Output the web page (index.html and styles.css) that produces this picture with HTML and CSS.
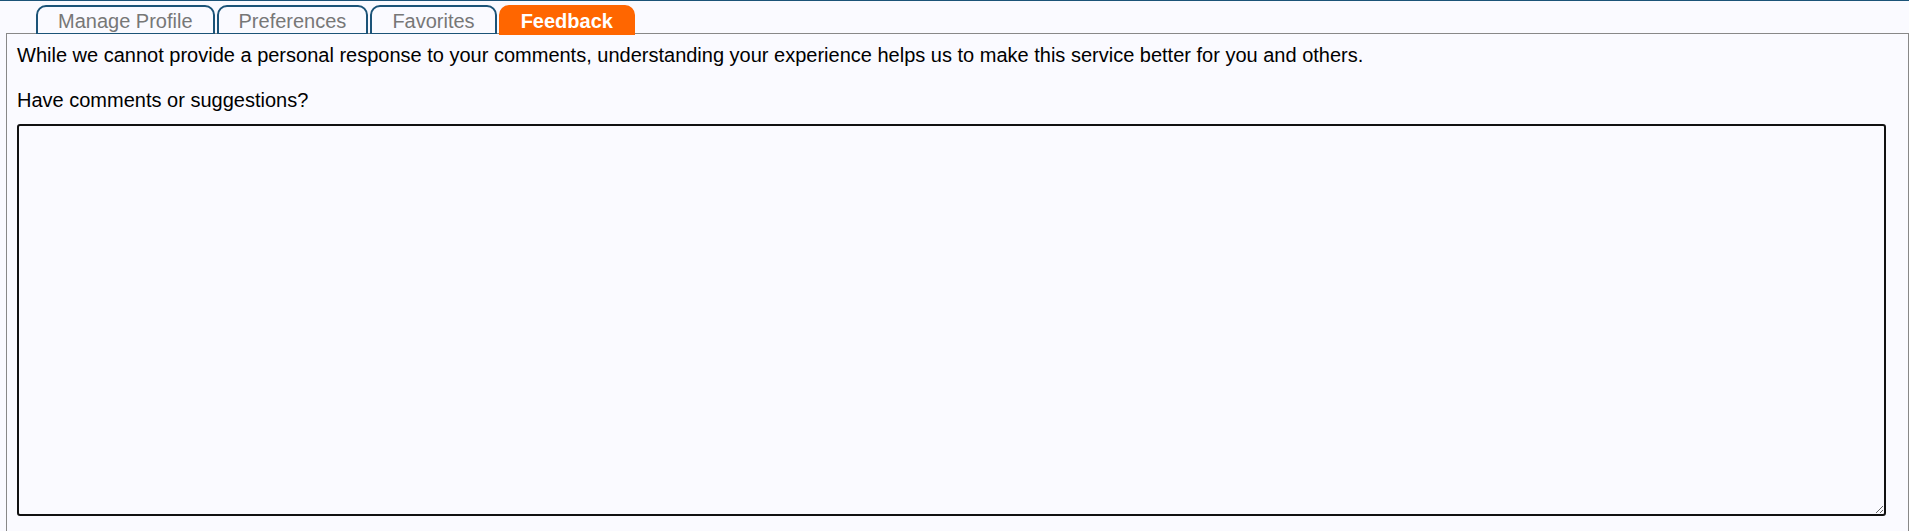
FILE: index.html
```html
<!DOCTYPE html>
<html lang="en">
<head>
  <meta charset="UTF-8">
  <title>Feedback</title>
  <link rel="stylesheet" href="styles.css">
</head>
<body>
  <div class="topbar"></div>
  <ul class="tabs">
    <li class="tab">Manage Profile</li>
    <li class="tab">Preferences</li>
    <li class="tab">Favorites</li>
    <li class="tab active">Feedback</li>
  </ul>
  <form class="panel" action="#">
    <p class="intro">While we cannot provide a personal response to your comments, understanding your experience helps us to make this service better for you and others.</p>
    <label for="comments" class="ask">Have comments or suggestions?</label>
    <textarea id="comments" class="comments"></textarea>
  </form>
</body>
</html>
```

FILE: styles.css
```css
*{
  padding: 0;
  margin: 0;
}
body{
  background-color: #fafaff;
  font-family: "Liberation Sans", Arial, sans-serif;
  font-size: 20px;
  color: #000;
}
.topbar{
  height: 1px;
  background-color: #1b5378;
}
.tabs{
  list-style: none;
  display: flex;
  align-items: flex-start;
  gap: 2px;
  margin-top: 4px;
  margin-bottom: -1px;
  padding-left: 36px;
}
.tab{
  position: relative;
  height: 29px;
  box-sizing: border-box;
  padding: 3px 20px 0;
  line-height: 23px;
  border: 2px solid #1b5378;
  border-bottom-width: 1px;
  border-radius: 10px 10px 0 0;
  background-color: #fafaff;
  color: #777;
}
.tab.active{
  height: 30px;
  margin-bottom: -1px;
  background-color: #ff6600;
  border-color: #ff6600;
  color: #fff;
  font-weight: bold;
}
.panel{
  display: block;
  margin-left: 6px;
  border: 1px solid #888;
  padding: 10px 21px 20px 10px;
  background-color: #fafaff;
}
.intro{
  line-height: 23px;
  margin-bottom: 22px;
}
.ask{
  display: block;
  line-height: 23px;
}
.comments{
  display: block;
  margin-top: 12px;
  width: 1869px;
  height: 392px;
  box-sizing: border-box;
  border: 2px solid #111;
  border-radius: 3px;
  background-color: #fafaff;
  font-family: "Liberation Sans", Arial, sans-serif;
  font-size: 16px;
}
```
